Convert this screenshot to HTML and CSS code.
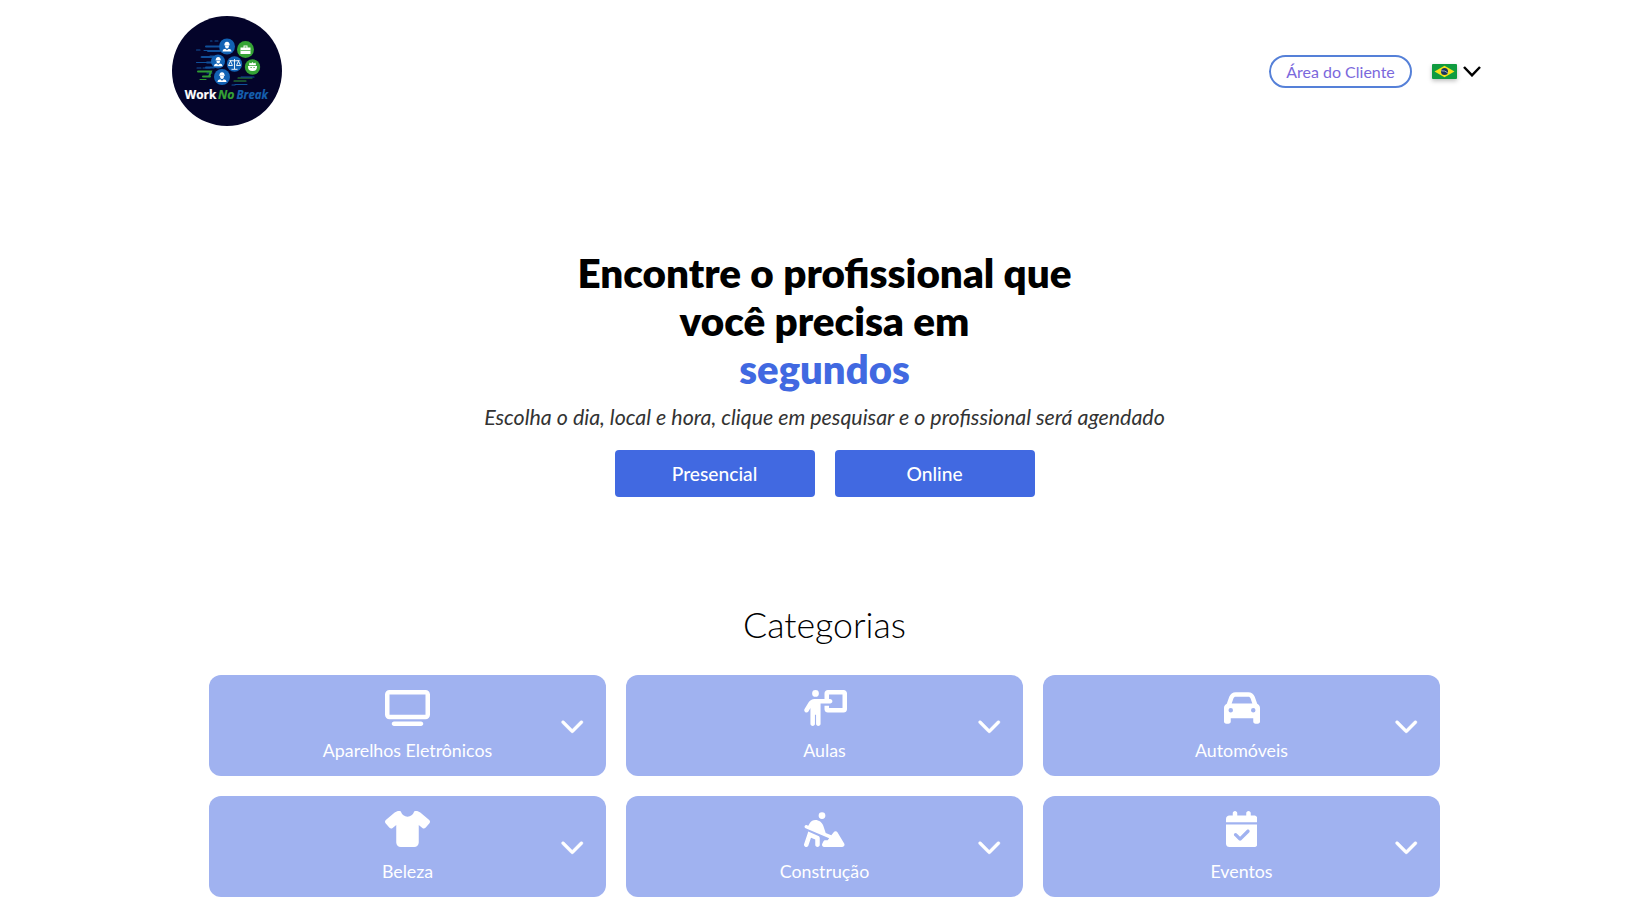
FILE: index.html
```html
<!DOCTYPE html>
<html lang="pt-BR">
<head>
<meta charset="utf-8">
<title>Work No Break</title>
<link rel="stylesheet" href="styles.css">
</head>
<body>
<svg class="sprite" aria-hidden="true">
  <symbol id="chevron" viewBox="0 0 512 512"><path d="M233.4 406.6c12.5 12.5 32.8 12.5 45.3 0l192-192c12.5-12.5 12.5-32.8 0-45.3s-32.8-12.5-45.3 0L256 338.7 86.6 169.4c-12.5-12.5-32.8-12.5-45.3 0s-12.5 32.8 0 45.3l192 192z"/></symbol>
  <symbol id="worker" viewBox="0 0 10 10"><path d="M2.6 3.4 Q2.8 .6 5 .6 Q7.2 .6 7.4 3.4 L8 3.9 H2z M3.2 4.2 H6.8 Q6.8 6.8 5 6.8 Q3.2 6.8 3.2 4.2z M.8 9.6 Q1 7.2 3.4 7 L5 8.4 6.6 7 Q9 7.2 9.2 9.6z"/></symbol>
</svg>
<div class="page">
  <header class="header">
    <svg class="logo" viewBox="0 0 110 110" role="img" aria-label="Work No Break">
      <circle cx="55" cy="55" r="55" fill="#04042a"/>
      <g class="trail trail-blue">
        <path d="M38.500 25h1.500M43 25h3M35 30.500h10M24.500 34h3.500M32 34.500h13M38 40h4M29 41h14M26 46.500h11M24.500 46.500H36M25 52h4M31 52h7M35 57h5"/>
      </g>
      <g class="trail trail-blue trail-wide"><path d="M34 30.500h13M36 35h12M30 41h14M35 46.500h9M34 51.500h8"/></g>
      <g class="trail trail-green trail-wide"><path d="M26 55.500h13l-2 5H31M34 60.500h4"/></g>
      <g class="trail trail-green"><path d="M28 63.500h6M66 62h14M62 65h12"/></g>
      <g class="trail trail-blue"><path d="M69 61h13M63 68.500h12M60 69h3"/></g>
      <circle cx="55" cy="30.500" r="8" fill="#1262b4"/>
      <circle cx="46" cy="45.500" r="7" fill="#1262b4"/>
      <circle cx="62.500" cy="48" r="7.700" fill="#1262b4"/>
      <circle cx="50" cy="61" r="8" fill="#1262b4"/>
      <circle cx="73.500" cy="33.500" r="8.500" fill="#35a335"/>
      <circle cx="80.500" cy="51" r="7.700" fill="#35a335"/>
      <g fill="#fff">
        <use href="#worker" x="49.500" y="25" width="11" height="11"/>
        <use href="#worker" x="41" y="40" width="10.500" height="11"/>
        <use href="#worker" x="44.500" y="55" width="11" height="12"/>
        <path d="M71.500 29.500h4v2h3v6.500h-10v-6.500h3z M72.500 30.500v1h2v-1z" fill-rule="evenodd"/>
        <path d="M76 50h9q.2 5-4.500 5T76 50zM77 49.200l.5-2.700 1.700 1 1.300-1.500 1.300 1.500 1.700-1 .5 2.700z"/>
      </g>
      <path d="M68.500 34.500h10" stroke="#35a335" stroke-width=".7"/>
      <path d="M78.500 51.500h1.200M81.500 51.500h1.200" stroke="#35a335" stroke-width="1"/>
      <path d="M62.500 43v10M59.500 53.300h6M57.500 44.500q5 .8 10 0M58.500 45l-2 4.500h4zM66.500 45l-2 4.500h4z" fill="none" stroke="#fff" stroke-width=".9"/>
      <g class="logo-text">
        <text x="12.800" y="82.500" textLength="31.500" lengthAdjust="spacingAndGlyphs" fill="#fff" stroke="#fff">Work</text>
        <text x="46" y="82.500" textLength="16.500" lengthAdjust="spacingAndGlyphs" fill="#35a335" stroke="#35a335" font-style="italic">No</text>
        <text x="64.500" y="82.500" textLength="31.500" lengthAdjust="spacingAndGlyphs" fill="#155fae" stroke="#155fae" font-style="italic">Break</text>
      </g>
    </svg>
    <nav class="nav">
      <a class="client-link">Área do Cliente</a>
      <div class="language">
        <svg class="flag" viewBox="0 0 25 15"><rect width="25" height="15" rx="1" fill="#0f9b3f"/><path d="M12.500 1.700 22.500 7.500 12.500 13.300 2.500 7.500z" fill="#f6e11b"/><circle cx="12.500" cy="7.500" r="3.500" fill="#19345f"/><path d="M9.200 6.800q3.600-.5 6.500 2" fill="none" stroke="#dbe4e8" stroke-width=".7"/></svg>
        <svg class="language-arrow" viewBox="0 0 18 11"><path d="M1 1l8 8.300L17 1" fill="none" stroke="#000" stroke-width="2.500"/></svg>
      </div>
    </nav>
  </header>

  <main>
    <section class="hero">
      <h1>Encontre o profissional que<br>você precisa em<br><span class="accent">segundos</span></h1>
      <p>Escolha o dia, local e hora, clique em pesquisar e o profissional será agendado</p>
      <div class="actions">
        <button>Presencial</button>
        <button>Online</button>
      </div>
    </section>

    <section class="categories">
      <h2>Categorias</h2>
      <div class="grid">
        <article class="card">
          <svg class="icon" viewBox="0 0 640 512"><path d="M64 64V352H576V64H64zM0 64C0 28.700 28.700 0 64 0H576c35.300 0 64 28.700 64 64V352c0 35.300-28.700 64-64 64H64c-35.300 0-64-28.700-64-64V64zM128 448H512c17.700 0 32 14.300 32 32s-14.300 32-32 32H128c-17.700 0-32-14.300-32-32s14.300-32 32-32z"/></svg>
          <span>Aparelhos Eletrônicos</span>
          <svg class="expand"><use href="#chevron"/></svg>
        </article>
        <article class="card">
          <svg class="icon" viewBox="0 0 640 512"><path d="M192 96a48 48 0 1 0 0-96 48 48 0 1 0 0 96zm-8 384V352h16V480c0 17.700 14.300 32 32 32s32-14.300 32-32V192h56 64 16c17.700 0 32-14.300 32-32s-14.300-32-32-32H384V64H576V256H384V224H320v48c0 26.500 21.500 48 48 48H592c26.500 0 48-21.500 48-48V48c0-26.500-21.500-48-48-48H368c-26.500 0-48 21.500-48 48v80H243.100 177.100c-33.700 0-64.900 17.700-82.300 46.600l-58.300 97c-9.100 15.100-4.200 34.800 10.900 43.900s34.800 4.200 43.900-10.900L120 256.900V480c0 17.700 14.300 32 32 32s32-14.300 32-32z"/></svg>
          <span>Aulas</span>
          <svg class="expand"><use href="#chevron"/></svg>
        </article>
        <article class="card">
          <svg class="icon" viewBox="0 0 512 512"><path d="M135.200 117.400L109.100 192H402.900l-26.100-74.600C372.300 104.600 360.200 96 346.600 96H165.400c-13.600 0-25.700 8.600-30.200 21.400zM39.600 196.800L74.800 96.300C88.300 57.800 124.600 32 165.400 32H346.600c40.800 0 77.100 25.800 90.600 64.300l35.200 100.500c23.200 9.600 39.600 32.500 39.600 59.200V400v48c0 17.700-14.300 32-32 32H448c-17.700 0-32-14.300-32-32V400H96v48c0 17.700-14.300 32-32 32H32c-17.700 0-32-14.300-32-32V400 256c0-26.700 16.400-49.600 39.600-59.200zM128 288a32 32 0 1 0 -64 0 32 32 0 1 0 64 0zm288 32a32 32 0 1 0 0-64 32 32 0 1 0 0 64z"/></svg>
          <span>Automóveis</span>
          <svg class="expand"><use href="#chevron"/></svg>
        </article>
        <article class="card">
          <svg class="icon" viewBox="0 0 640 512"><path d="M211.800 0c7.800 0 14.300 5.700 16.700 13.200C240.800 51.900 277.100 80 320 80s79.200-28.100 91.500-66.800C413.900 5.700 420.400 0 428.200 0h12.600c22.500 0 44.200 7.900 61.500 22.300L628.500 127.400c6.600 5.500 10.700 13.500 11.400 22.100s-2.100 17.100-7.800 23.600l-56 64c-11.400 13.100-31.200 14.600-44.600 3.500L480 197.700V448c0 35.300-28.700 64-64 64H224c-35.300 0-64-28.700-64-64V197.700l-51.500 42.900c-13.300 11.100-33.100 9.600-44.600-3.500l-56-64c-5.700-6.500-8.500-15-7.800-23.600s4.800-16.600 11.400-22.100L137.700 22.300C155 7.900 176.700 0 199.200 0h12.600z"/></svg>
          <span>Beleza</span>
          <svg class="expand"><use href="#chevron"/></svg>
        </article>
        <article class="card">
          <svg class="icon" viewBox="0 0 576 512"><path d="M208 64a48 48 0 1 1 96 0 48 48 0 1 1 -96 0zM9.800 214.800c5.100-12.200 19.100-18 31.400-12.900L60.700 210l22.900-38.100C99.900 144.600 129.300 128 161 128c51.400 0 97 32.900 113.300 81.700l34.600 103.700 79.300 33.100 34.200-45.600c6.400-8.500 16.600-13.300 27.200-12.800s20.300 6.400 25.800 15.500l96 160c5.900 9.900 6.100 22.200 .4 32.200s-16.300 16.200-27.800 16.200H288c-11.100 0-21.400-5.700-27.200-15.200s-6.400-21.200-1.400-31.100l16-32c5.400-10.800 16.500-17.700 28.600-17.700h32l22.500-30L22.800 246.200c-12.200-5.100-18-19.100-12.900-31.400zm82.800 91.800l112 48c11.800 5 19.400 16.600 19.400 29.400v96c0 17.700-14.300 32-32 32s-32-14.300-32-32V405.100l-60.600-26-37 111c-5.600 16.800-23.700 25.800-40.500 20.200S-3.900 486.600 1.600 469.900l48-144 11-33 32 13.700z"/></svg>
          <span>Construção</span>
          <svg class="expand"><use href="#chevron"/></svg>
        </article>
        <article class="card">
          <svg class="icon" viewBox="0 0 448 512"><path d="M128 0c17.700 0 32 14.300 32 32V64H288V32c0-17.700 14.300-32 32-32s32 14.300 32 32V64h48c26.500 0 48 21.500 48 48v48H0V112C0 85.500 21.500 64 48 64H96V32c0-17.700 14.300-32 32-32zM0 192H448V464c0 26.500-21.500 48-48 48H48c-26.500 0-48-21.500-48-48V192zM329 305c9.400-9.400 9.400-24.600 0-33.900s-24.600-9.400-33.900 0l-95 95-47-47c-9.400-9.400-24.600-9.400-33.900 0s-9.400 24.600 0 33.900l64 64c9.400 9.400 24.600 9.400 33.900 0L329 305z"/></svg>
          <span>Eventos</span>
          <svg class="expand"><use href="#chevron"/></svg>
        </article>
      </div>
    </section>
  </main>
</div>
</body>
</html>
```
FILE: styles.css
```css
* { box-sizing: border-box; }
html { overflow: hidden; }
body { margin: 0; background: #fff; color: #000; font-family: Lato, "Open Sans", sans-serif; }
h1, h2, p { margin: 0; }
.sprite { display: none; }
.page { width: 1649px; }

.header { display: flex; justify-content: space-between; align-items: center; width: 1309px; height: 142px; margin-left: 172px; }
.logo { width: 110px; height: 110px; }
.logo-text { font: 700 12px "Open Sans", sans-serif; stroke-width: .2; }
.trail { fill: none; stroke-width: 1.1; stroke-linecap: round; }
.trail-wide { stroke-width: 2; }
.trail-blue { stroke: #10509a; }
.trail-green { stroke: #2f9a34; }
.nav { display: flex; align-items: center; gap: 20px; }
.client-link { width: 143px; height: 33px; border: 2px solid #5580d8; border-radius: 17px; color: #7b68dc; font-size: 16px; line-height: 30px; text-align: center; }
.language { display: flex; align-items: center; gap: 6px; }
.flag { width: 25px; height: 15px; filter: drop-shadow(0 2px 2px rgba(0, 0, 0, .25)); }
.language-arrow { width: 18px; height: 11px; }

.hero { display: flex; flex-direction: column; align-items: center; padding-top: 107px; text-align: center; }
.hero h1 { font-size: 40.4px; font-weight: 800; line-height: 48px; }
.accent { font-size: 40px; color: #4169e1; }
.hero p { margin-top: 9px; color: #333; font-size: 21.4px; font-style: italic; line-height: 30px; }
.actions { display: flex; gap: 20px; margin-top: 18px; }
.actions button { width: 200px; height: 47px; padding: 0; border: 0; border-radius: 4px; background: #4169e1; color: #fff; font: 500 19.2px Lato, sans-serif; }

.categories { display: flex; flex-direction: column; align-items: center; padding-top: 106px; }
.categories h2 { font-size: 35.7px; font-weight: 300; line-height: 44px; }
.grid { display: grid; grid-template-columns: repeat(3, 397px); gap: 20px; margin-top: 28px; }
.card { position: relative; display: flex; flex-direction: column; align-items: center; height: 101px; padding-top: 15px; border-radius: 12px; background: #a0b2f0; color: #fff; font-size: 17.8px; line-height: 22px; }
.card span { margin-top: 13px; }
.icon { height: 36px; fill: #fff; }
.expand { position: absolute; top: 37.7px; right: 21.5px; width: 24.5px; height: 24.5px; fill: #fff; stroke: #fff; stroke-width: 8px; }
```
